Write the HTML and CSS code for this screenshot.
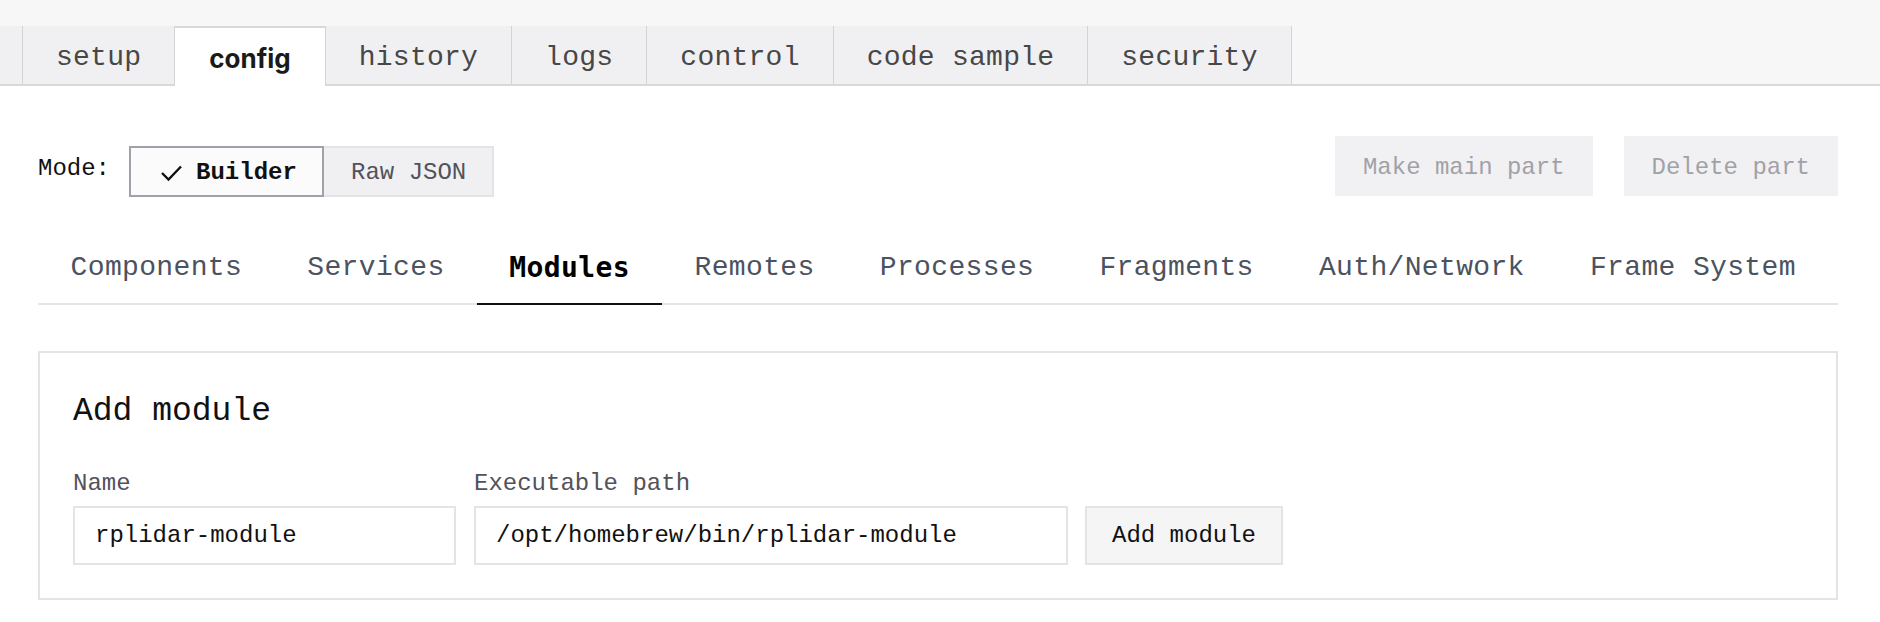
FILE: index.html
```html
<!DOCTYPE html>
<html>
<head>
<meta charset="utf-8">
<link rel="stylesheet" href="styles.css">
</head>
<body>
<div class="topband"></div>
<nav class="tabbar">
  <div class="stub"></div>
  <div class="tab">setup</div>
  <div class="tab active">config</div>
  <div class="tab">history</div>
  <div class="tab">logs</div>
  <div class="tab">control</div>
  <div class="tab">code sample</div>
  <div class="tab">security</div>
</nav>
<main class="content">
  <div class="moderow">
    <div class="modegroup">
      <span class="modelabel">Mode:</span>
      <div class="segment">
        <button class="seg seg-on"><svg class="check" width="23" height="18" viewBox="0 0 23 18"><polyline points="2,9 8.5,15.5 21,2.5" fill="none" stroke="#111" stroke-width="2.4"/></svg>Builder</button>
        <button class="seg seg-off">Raw JSON</button>
      </div>
    </div>
    <div class="actions">
      <button class="ghost">Make main part</button>
      <button class="ghost">Delete part</button>
    </div>
  </div>
  <div class="subtabs">
    <div class="subtab">Components</div>
    <div class="subtab">Services</div>
    <div class="subtab subactive">Modules</div>
    <div class="subtab">Remotes</div>
    <div class="subtab">Processes</div>
    <div class="subtab">Fragments</div>
    <div class="subtab">Auth/Network</div>
    <div class="subtab">Frame System</div>
  </div>
  <section class="card">
    <h2 class="cardtitle">Add module</h2>
    <div class="formrow">
      <label class="field field-name">
        <span class="flabel">Name</span>
        <span class="input">rplidar-module</span>
      </label>
      <label class="field field-path">
        <span class="flabel">Executable path</span>
        <span class="input">/opt/homebrew/bin/rplidar-module</span>
      </label>
      <button class="addbtn">Add module</button>
    </div>
  </section>
</main>
</body>
</html>
```
FILE: styles.css
```css
* { box-sizing: border-box; }
body {
  margin: 0;
  background: #fff;
  font-family: "Liberation Mono", "DejaVu Sans Mono", monospace;
  color: #111;
}
.topband { height: 26px; background: #f7f7f7; }
.tabbar {
  display: flex;
  height: 60px;
  background: #f7f7f7;
  border-bottom: 2px solid #d9d9dc;
}
.stub {
  width: 23px;
  background: #f0f0f2;
  border-right: 1px solid #d4d4d8;
}
.tab {
  display: flex;
  align-items: center;
  padding: 4px 33px 0;
  background: #f0f0f2;
  border-right: 1px solid #d4d4d8;
  font-size: 28px;
  letter-spacing: 0.25px;
  color: #474747;
  white-space: nowrap;
}
.tab.active {
  background: #fff;
  border-top: 2px solid #d9d9dc;
  border-left: 1px solid #d4d4d8;
  margin-left: -1px;
  margin-bottom: -2px;
  height: 60px;
  font-family: Inter, "Liberation Sans", sans-serif;
  font-weight: 700;
  font-size: 26px;
  letter-spacing: 0;
  color: #1a1a1a;
  padding: 2px 34px 0;
}
.content { padding: 0 42px 0 38px; }
.moderow {
  display: flex;
  justify-content: space-between;
  align-items: flex-end;
  margin-top: 50px;
}
.modegroup { display: flex; align-items: center; gap: 19px; }
.modelabel { font-size: 24px; color: #111; margin-top: -6px; }
.segment { display: flex; }
.seg {
  height: 51px;
  font-family: "Liberation Mono", monospace;
  font-size: 24px;
  display: flex;
  align-items: center;
  cursor: pointer;
}
.seg-on {
  background: #fbfbfb;
  border: 2px solid #a1a1aa;
  padding: 2px 25px 0 29px;
  font-weight: 700;
  color: #111;
  gap: 13px;
  width: 195px;
}
.seg-off {
  background: #f0f0f2;
  border: 2px solid #e4e4e7;
  border-left: none;
  padding: 2px 25px 0 27px;
  color: #52525b;
  width: 170px;
}
.check { display: block; }
.actions { display: flex; gap: 31px; margin-bottom: 1px; }
.ghost {
  height: 60px;
  padding: 3px 28px 0;
  border: none;
  background: #f1f1f3;
  color: #a1a1a8;
  font-family: "Liberation Mono", monospace;
  font-size: 24px;
}
.subtabs {
  display: flex;
  margin-top: 36px;
  border-bottom: 2px solid #e4e4e7;
}
.subtab {
  padding: 19px 32.6px 19px;
  line-height: 32px;
  font-size: 28px;
  letter-spacing: 0.35px;
  color: #4b5260;
  white-space: nowrap;
  flex-shrink: 0;
}
.subactive {
  font-family: "DejaVu Sans Mono", monospace;
  font-weight: 700;
  color: #000;
  border-bottom: 2px solid #111;
  margin-bottom: -2px;
  padding: 19px 32px 19px;
  font-size: 28px;
  letter-spacing: 0.4px;
}
.card {
  margin-top: 46px;
  border: 2px solid #e4e4e4;
  padding: 39px 33px 33px;
}
.cardtitle {
  margin: 0;
  font-weight: 400;
  font-size: 33px;
  line-height: 40px;
  color: #111;
}
.formrow {
  display: flex;
  align-items: flex-end;
  gap: 17px;
  margin-top: 36px;
}
.field { display: flex; flex-direction: column; gap: 6px; }
.field-name { width: 383px; }
.field-path { width: 594px; margin-left: 1px; }
.flabel { font-size: 24px; line-height: 32px; color: #52525b; }
.input {
  height: 59px;
  border: 2px solid #e4e4e4;
  padding: 0 20px;
  display: flex;
  align-items: center;
  font-size: 24px;
  color: #111;
}
.addbtn {
  height: 59px;
  width: 198px;
  border: 2px solid #e4e4e4;
  background: #f5f5f5;
  font-family: "Liberation Mono", monospace;
  font-size: 24px;
  color: #111;
}
```
